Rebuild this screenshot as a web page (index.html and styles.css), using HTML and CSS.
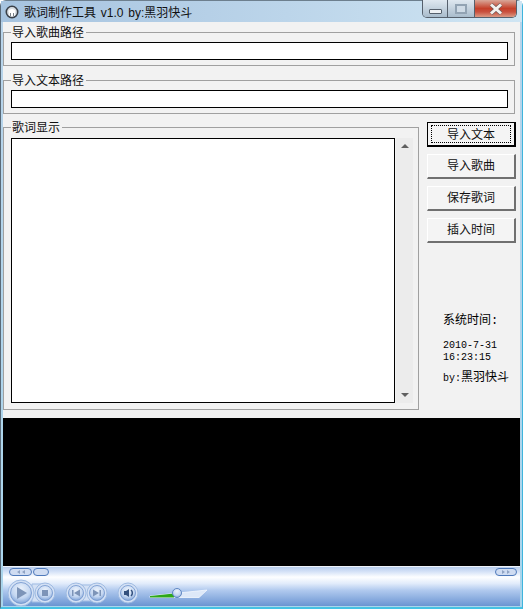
FILE: index.html
```html
<!DOCTYPE html>
<html lang="zh-CN">
<head>
    <meta charset="UTF-8">
    <meta name="viewport" content="width=device-width, initial-scale=1.0">
    <title>歌词制作工具</title>
    <link rel="stylesheet" href="styles.css">
</head>
<body>
    <div class="window">
        <div class="titlebar">
            <svg class="app-icon" width="14" height="14" viewBox="0 0 14 14">
                <circle cx="7" cy="7" r="5.7" fill="#d8dde2" stroke="#3a4048" stroke-width="1.6"/>
                <path d="M3.5 5.5q3.500-3 7 0l-1 5.500h-5z" fill="#fff"/>
                <path d="M5.500 11v-3M8.500 11v-3" stroke="#59626b" stroke-width="0.8"/>
            </svg>
            <span class="title-text">歌词制作工具 v1.0 by:黑羽快斗</span>
            <div class="win-buttons">
                <div class="win-btn btn-min"><span class="min-glyph"></span></div>
                <div class="win-btn btn-max"><span class="max-glyph"></span></div>
                <div class="win-btn btn-close">
                    <svg width="16" height="12" viewBox="0 0 16 12">
                        <path d="M3 1.500l10 9M13 1.500l-10 9" stroke="#6d5a58" stroke-width="4.200"/>
                        <path d="M3 1.500l10 9M13 1.500l-10 9" stroke="#f4f1ee" stroke-width="3"/>
                    </svg>
                </div>
            </div>
        </div>

        <div class="content">
            <fieldset class="group path-group">
                <legend>导入歌曲路径</legend>
                <input class="path-input" type="text">
            </fieldset>
            <fieldset class="group path-group second">
                <legend>导入文本路径</legend>
                <input class="path-input" type="text">
            </fieldset>

            <div class="lower">
                <fieldset class="group lyric-group">
                    <legend>歌词显示</legend>
                    <div class="lyric-body">
                        <div class="lyric-box"></div>
                        <div class="scrollbar">
                            <span class="arrow-up"></span>
                            <span class="arrow-down"></span>
                        </div>
                    </div>
                </fieldset>
                <div class="side">
                    <button class="btn active"><span>导入文本</span></button>
                    <button class="btn"><span>导入歌曲</span></button>
                    <button class="btn"><span>保存歌词</span></button>
                    <button class="btn"><span>插入时间</span></button>
                    <div class="clock">
                        <div class="clock-label">系统时间:</div>
                        <div class="clock-time">2010-7-31<br>16:23:15</div>
                        <div class="clock-by"><span class="latin">by:</span>黑羽快斗</div>
                    </div>
                </div>
            </div>

            <div class="video"></div>

            <div class="player">
                <div class="pills">
                    <span class="pill pill-a">
                        <svg width="10" height="4" viewBox="0 0 10 4"><path d="M4 0v4L1 2zM9 0v4L6 2z" fill="#8fa3c4"/></svg>
                    </span>
                    <span class="pill pill-b"></span>
                    <span class="pill pill-c">
                        <svg width="10" height="4" viewBox="0 0 10 4"><path d="M1 0v4l3-2zM6 0v4l3-2z" fill="#8fa3c4"/></svg>
                    </span>
                </div>
                <svg class="controls" width="210" height="27" viewBox="0 0 210 27">
                    <defs>
                        <radialGradient id="ball" cx="50%" cy="30%" r="75%">
                            <stop offset="0" stop-color="#eaf1fb"/>
                            <stop offset="0.6" stop-color="#c3d6f1"/>
                            <stop offset="1" stop-color="#7399d2"/>
                        </radialGradient>
                    </defs>
                    <g fill="#d3e0f4" stroke="#9fbbe2" stroke-width="1">
                        <path d="M26 5h16v18h-16zM70 6h22v16h-22z"/>
                        <circle cx="15" cy="14" r="13"/>
                        <circle cx="39" cy="14" r="10"/>
                        <circle cx="70" cy="14" r="10"/>
                        <circle cx="91" cy="14" r="10"/>
                        <circle cx="122" cy="14" r="10"/>
                    </g>
                    <g fill="url(#ball)" stroke="#6f93cb" stroke-width="0.8">
                        <circle cx="15" cy="14" r="10.500"/>
                        <circle cx="39" cy="14" r="7.500"/>
                        <circle cx="70" cy="14" r="7.500"/>
                        <circle cx="91" cy="14" r="7.500"/>
                        <circle cx="122" cy="14" r="7.500"/>
                    </g>
                    <g fill="#7d94b8">
                        <path d="M11 8l10 6-10 6z"/>
                        <rect x="36" y="11" width="6" height="6"/>
                        <path d="M66 11h1.500v6h-1.500zM74 10.500v7l-6-3.500z"/>
                        <path d="M95 11h-1.500v6h1.500zM87 10.500v7l6-3.500z"/>
                    </g>
                    <path d="M118 12h2l3-2v8l-3-2h-2z" fill="#33507e"/>
                    <path d="M125 11a4 4 0 0 1 0 6" stroke="#33507e" stroke-width="1.500" fill="none"/>
                    <path d="M144 17l57-6-8 7.500h-49z" fill="#dde8f8" stroke="#f4f8fe" stroke-width="0.8"/>
                    <path d="M144 17l24-2.500v4h-24z" fill="#2ea81a"/>
                    <circle cx="171" cy="14" r="4.500" fill="url(#ball)" stroke="#5f86c2"/>
                </svg>
            </div>
        </div>
    </div>
</body>
</html>
```

FILE: styles.css
```css
* {
    box-sizing: border-box;
}
html, body {
    margin: 0;
    padding: 0;
}
body {
    width: 523px;
    height: 609px;
    overflow: hidden;
    font-family: "Noto Sans CJK SC", sans-serif;
    font-size: 12px;
    color: #000;
}
.window {
    height: 609px;
    display: flex;
    flex-direction: column;
    padding: 0 2px 1px 2px;
    background: linear-gradient(#b9d4ea, #a9d5ec);
    border-left: 1px solid #5a6a78;
    border-right: 1px solid #3fb4dc;
    border-bottom: 2px solid #45c2e4;
    border-top: 1px solid #6d7f8e;
    border-radius: 6px 6px 0 0;
}
.titlebar {
    height: 21px;
    flex: none;
    display: flex;
    align-items: center;
    margin: 0 -2px;
    padding-left: 4px;
    background: linear-gradient(90deg, #a6c3df, #bcd5ea 55%, #cfe5f3);
    position: relative;
}
.app-icon {
    margin-right: 5px;
    flex: none;
}
.title-text {
    font-family: "Liberation Sans", "Noto Sans CJK SC", sans-serif;
    white-space: pre;
    word-spacing: 1.5px;
    color: #111;
}
.win-buttons {
    position: absolute;
    top: -1px;
    right: 5px;
    height: 18px;
    display: flex;
    border: 1px solid #56606c;
    border-top: none;
    border-radius: 0 0 5px 5px;
    overflow: hidden;
}
.win-btn {
    height: 100%;
    display: flex;
    align-items: center;
    justify-content: center;
}
.btn-min {
    width: 25px;
    background: linear-gradient(#dfe8f0, #a9bccc);
    border-right: 1px solid #56606c;
}
.btn-max {
    width: 27px;
    background: linear-gradient(#dfe8f0, #a9bccc);
    border-right: 1px solid #56606c;
}
.btn-close {
    width: 41px;
    background: linear-gradient(#d9a798, #c5402a 50%, #c9513f 70%, #dc9a84);
}
.min-glyph {
    width: 13px;
    height: 5px;
    margin-top: 5px;
    background: #eef1f4;
    border: 1px solid #56606c;
    border-radius: 1px;
}
.max-glyph {
    width: 12px;
    height: 10px;
    border: 2px solid #92a3b3;
    background: #cfdbe6;
}
.content {
    flex: 1;
    display: flex;
    flex-direction: column;
    background: #f2f2f2;
    min-height: 0;
}
.group {
    margin: 0;
    padding: 0 7px;
    border: 1px solid #a0a0a0;
    min-width: 0;
}
.group legend {
    padding: 0 2px 0 1px;
    line-height: 14px;
    font-size: 12px;
    color: #111;
}
.path-group {
    margin-top: 3px;
    margin-right: 5px;
    height: 41px;
}
.path-group.second {
    margin-top: 7px;
}
.path-input {
    display: block;
    width: 497px;
    height: 18px;
    margin-top: 3px;
    border: 1px solid #000;
    background: #fff;
    padding: 0;
}
.lower {
    display: flex;
    margin-top: 6px;
    height: 290px;
}
.lyric-group {
    width: 416px;
    height: 290px;
    flex: none;
}
.lyric-body {
    display: flex;
    margin-top: 4px;
}
.lyric-box {
    flex: none;
    width: 384px;
    height: 265px;
    background: #fff;
    border: 1px solid #000;
}
.scrollbar {
    flex: none;
    width: 17px;
    height: 265px;
    margin-left: 1px;
    background: #ececec;
    display: flex;
    flex-direction: column;
    justify-content: space-between;
    align-items: center;
    padding: 6px 0;
}
.arrow-up {
    border: 4px solid transparent;
    border-top: 0;
    border-bottom: 4px solid #606060;
}
.arrow-down {
    border: 4px solid transparent;
    border-bottom: 0;
    border-top: 4px solid #606060;
}
.side {
    margin-left: 8px;
    width: 90px;
    display: flex;
    flex-direction: column;
    padding-top: 2px;
}
.btn {
    width: 89px;
    height: 25px;
    margin: 0 0 7px 0;
    padding: 0 0 4px 0;
    font-family: inherit;
    font-size: 12px;
    background: #f4f4f4;
    border: 1px solid;
    border-color: #fff #707070 #707070 #fff;
    border-width: 1px 2px 2px 1px;
    color: #111;
}
.btn.active {
    border: 1px solid #000;
    border-width: 1px 2px 2px 1px;
    padding: 2px 3px;
}
.btn.active span {
    display: block;
    height: 18px;
    line-height: 16px;
    border: 1px dotted #000;
}
.clock {
    margin-top: 64px;
    padding-left: 16px;
    font-family: "Liberation Mono", "Noto Sans CJK SC", monospace;
}
.clock-label {
    line-height: 14px;
    white-space: nowrap;
}
.clock-time {
    margin-top: 12px;
    font-size: 10px;
    line-height: 12px;
}
.clock-by {
    margin-top: 7px;
    line-height: 14px;
    white-space: nowrap;
}
.clock-by .latin {
    font-size: 10px;
}
.video {
    background: #000;
    height: 148px;
    flex: none;
    margin-top: 8px;
}
.player {
    flex: 1;
    min-height: 0;
    border-top: 1px solid #eef3fa;
    background: linear-gradient(#b7cdec, #d5e2f7 12%, #fdfeff 26%, #e2ecfb 42%, #b0c9ee 60%, #6a94d2);
    padding: 1px 4px 0 4px;
    overflow: hidden;
}
.pills {
    display: flex;
    height: 8px;
}
.pill {
    height: 8px;
    border: 1px solid #4f7abb;
    border-radius: 4px;
    background: #cfdcf2;
    display: flex;
    align-items: center;
    justify-content: center;
}
.pill-a {
    width: 23px;
    margin-left: 2px;
}
.pill-b {
    width: 16px;
    margin-left: 1px;
}
.pill-c {
    width: 22px;
    margin-left: auto;
    margin-right: -1px;
}
.controls {
    display: block;
    margin: 3px 0 0 -1px;
}
```
